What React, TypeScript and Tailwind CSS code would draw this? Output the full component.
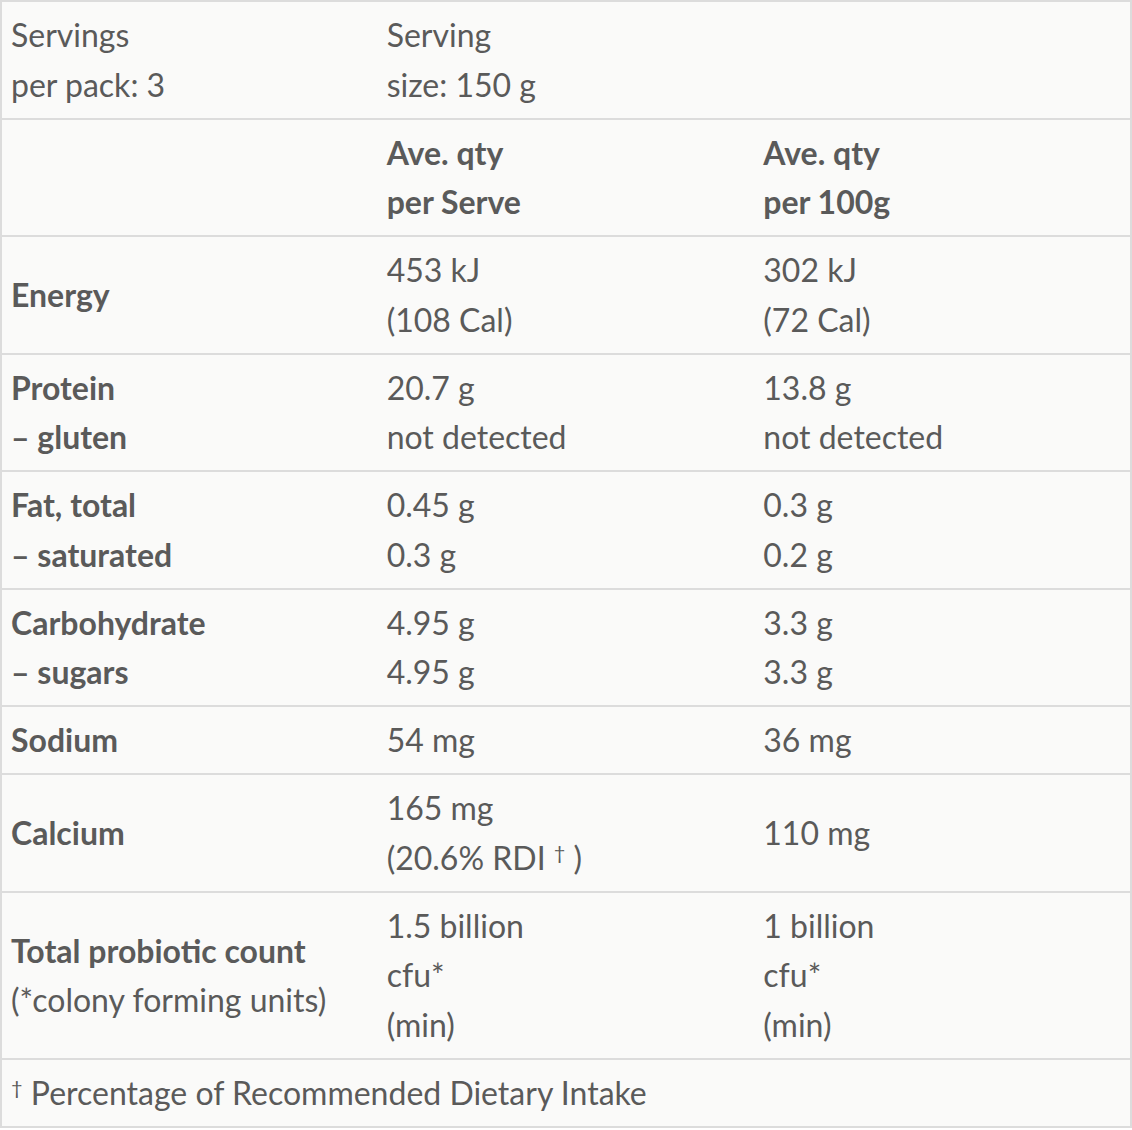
const rows: { label: React.ReactNode; serve: React.ReactNode; per100: React.ReactNode }[] = [
  {
    label: <strong>Energy</strong>,
    serve: <>453 kJ<br />(108 Cal)</>,
    per100: <>302 kJ<br />(72 Cal)</>,
  },
  {
    label: <strong>Protein<br />– gluten</strong>,
    serve: <>20.7 g<br />not detected</>,
    per100: <>13.8 g<br />not detected</>,
  },
  {
    label: <strong>Fat, total<br />– saturated</strong>,
    serve: <>0.45 g<br />0.3 g</>,
    per100: <>0.3 g<br />0.2 g</>,
  },
  {
    label: <strong>Carbohydrate<br />– sugars</strong>,
    serve: <>4.95 g<br />4.95 g</>,
    per100: <>3.3 g<br />3.3 g</>,
  },
  {
    label: <strong>Sodium</strong>,
    serve: <>54 mg</>,
    per100: <>36 mg</>,
  },
  {
    label: <strong>Calcium</strong>,
    serve: (
      <>
        165 mg<br />(20.6% RDI <sup className="text-[20px]">†</sup> )
      </>
    ),
    per100: <>110 mg</>,
  },
  {
    label: (
      <>
        <strong>Total probiotic count</strong>
        <br />
        (*colony forming units)
      </>
    ),
    serve: <>1.5 billion<br />cfu*<br />(min)</>,
    per100: <>1 billion<br />cfu*<br />(min)</>,
  },
];

const cell = 'border-y-2 border-[#dcdcdc] pl-[9px] pr-[10px] py-[8.25px] align-middle';

export default function App() {
  return (
    <div
      className="min-h-screen w-[1132px] bg-white text-[#5a5a5a]"
      style={{ fontFamily: 'Lato, "Open Sans", sans-serif' }}
    >
      <table className="w-full table-fixed border-collapse border-2 border-[#dcdcdc] bg-[#fafaf9] text-left text-[32px] leading-[49.5px]">
        <tbody>
          <tr>
            <td className={cell}>Servings<br />per pack: 3</td>
            <td className={cell}>Serving<br />size: 150 g</td>
            <td className={cell}></td>
          </tr>
          <tr>
            <td className={cell}></td>
            <th className={`${cell} font-bold`}>Ave. qty<br />per Serve</th>
            <th className={`${cell} font-bold`}>Ave. qty<br />per 100g</th>
          </tr>
          {rows.map((r, i) => (
            <tr key={i}>
              <td className={`${cell} [&_strong]:font-bold`}>{r.label}</td>
              <td className={cell}>{r.serve}</td>
              <td className={cell}>{r.per100}</td>
            </tr>
          ))}
          <tr>
            <td className={cell} colSpan={3}>
              <sup className="text-[20px]">†</sup> Percentage of Recommended Dietary Intake
            </td>
          </tr>
        </tbody>
      </table>
    </div>
  );
}
